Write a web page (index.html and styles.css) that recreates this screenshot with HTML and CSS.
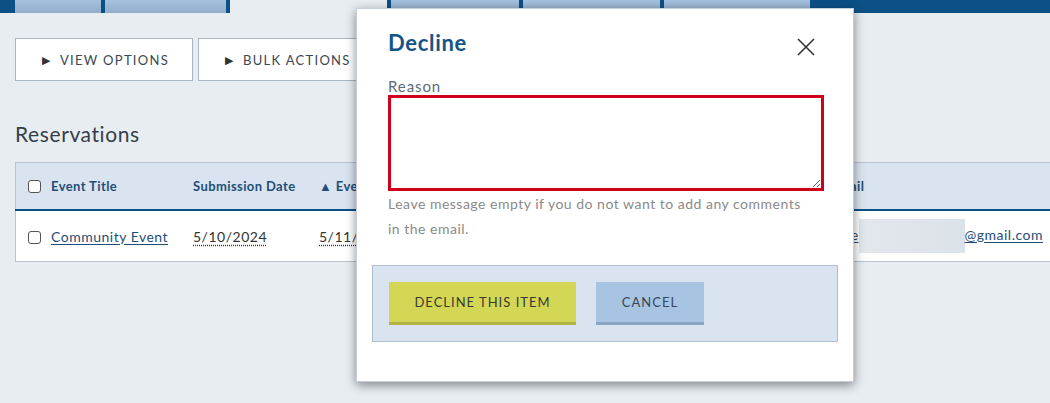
FILE: index.html
```html
<!DOCTYPE html>
<html lang="en">
<head>
  <meta charset="UTF-8">
  <meta name="viewport" content="width=device-width, initial-scale=1.0">
  <title>Reservations - Decline</title>
  <link rel="stylesheet" href="styles.css">
</head>
<body>

  <!-- Barra de abas no topo -->
  <div class="topnav">
    <span class="tab tab-1"></span>
    <span class="tab tab-2"></span>
    <span class="tab tab-3 ativa"></span>
    <span class="tab tab-4"></span>
    <span class="tab tab-5"></span>
    <span class="tab tab-6"></span>
  </div>

  <div class="page">
    <div class="toolbar">
      <button class="tool-btn btn-view"><span class="arrow">&#9654;</span>View Options</button>
      <button class="tool-btn btn-bulk"><span class="arrow">&#9654;</span>Bulk Actions</button>
    </div>

    <h2 class="titulo">Reservations</h2>

    <table class="tabela">
      <thead>
        <tr>
          <th class="col-title"><input type="checkbox" class="check">Event Title</th>
          <th class="col-sub">Submission Date</th>
          <th class="col-date">&#9650; Event Date</th>
          <th class="col-loc"></th>
          <th class="col-contact"></th>
          <th class="col-email">Email</th>
        </tr>
      </thead>
      <tbody>
        <tr>
          <td class="col-title"><input type="checkbox" class="check"><a href="#">Community Event</a></td>
          <td class="col-sub"><span class="data">5/10/2024</span></td>
          <td class="col-date"><span class="data">5/11/2024</span></td>
          <td class="col-loc"></td>
          <td class="col-contact"></td>
          <td class="col-email"><a href="#">jane<span class="oculto"></span>@gmail.com</a></td>
        </tr>
      </tbody>
    </table>
  </div>

  <!-- Modal de recusa -->
  <div class="modal">
    <div class="modal-head">
      <h3>Decline</h3>
      <button class="fechar" aria-label="Close">
        <svg width="18" height="18" viewBox="0 0 18 18">
          <path d="M1 1 L17 17 M17 1 L1 17" stroke="#333" stroke-width="1.6" fill="none"/>
        </svg>
      </button>
    </div>
    <label class="rotulo" for="motivo">Reason</label>
    <textarea id="motivo" class="motivo"></textarea>
    <p class="ajuda">Leave message empty if you do not want to add any comments in the email.</p>
    <div class="modal-foot">
      <button class="btn-decline">Decline This Item</button>
      <button class="btn-cancel">Cancel</button>
    </div>
  </div>

</body>
</html>
```

FILE: styles.css
```css
/* Estilos gerais */
body {
  margin: 0;
  padding: 0;
  font-family: "Lato", "Open Sans", sans-serif;
  letter-spacing: 0.5px;
  background: #e8edf2;
  overflow: hidden;
  height: 403px;
  position: relative;
}

/* Abas do topo */
.topnav {
  display: flex;
  gap: 4px;
  height: 13px;
  padding-left: 15px;
  background: #0b5186;
}

.tab {
  height: 13px;
  background: linear-gradient(#a6c2e0, #93adc9);
}

.tab.ativa {
  background: #e8edf2;
}

.tab-1 { width: 86px; }
.tab-2 { width: 121px; }
.tab-3 { width: 157px; }
.tab-4 { width: 128px; }
.tab-5 { width: 137px; }
.tab-6 { width: 146px; }

.page {
  padding: 0 15px;
}

/* Botões de opções */
.toolbar {
  display: flex;
  gap: 5px;
  margin-top: 25px;
}

.tool-btn {
  height: 43px;
  background: #fff;
  border: 1px solid #aab6c4;
  font-family: inherit;
  font-size: 13px;
  letter-spacing: 1.3px;
  text-transform: uppercase;
  color: #3b4754;
  display: flex;
  align-items: center;
  padding: 0 0 0 26px;
  cursor: pointer;
}

.btn-view { width: 178px; }
.btn-bulk { width: 190px; }

.arrow {
  font-size: 11px;
  color: #333;
  margin-right: 10px;
  letter-spacing: 0;
}

.titulo {
  margin: 40px 0 0;
  font-size: 21px;
  font-weight: normal;
  letter-spacing: 0.6px;
  color: #343e48;
  line-height: 26px;
}

/* Tabela de reservas */
.tabela {
  margin-top: 15px;
  width: 1080px;
  border-collapse: collapse;
  table-layout: fixed;
  background: #fff;
  border: 1px solid #b6c3d1;
}

.tabela th {
  height: 46px;
  background: #dae4f0;
  border-bottom: 2px solid #0b5186;
  text-align: left;
  font-size: 13px;
  font-weight: bold;
  letter-spacing: 0.4px;
  color: #1f4e78;
  padding: 0;
}

.tabela td {
  height: 50px;
  font-size: 14px;
  color: #333;
  padding: 0;
}

.col-title { width: 165px; padding-left: 12px !important; }
.col-sub { width: 126px; }
.col-date { width: 160px; }
.col-loc { width: 180px; }
.col-contact { width: 172px; }

.check {
  appearance: none;
  width: 13px;
  height: 13px;
  border: 1.5px solid #555;
  border-radius: 3px;
  background: #fff;
  margin: 0 10px 0 0;
  vertical-align: -2px;
  box-sizing: border-box;
}

.tabela a {
  color: #1f4e78;
  text-decoration: underline;
  text-underline-offset: 2px;
}

.data {
  text-decoration: underline dotted #333;
  text-underline-offset: 3px;
}

.oculto {
  display: inline-block;
  width: 106px;
  height: 34px;
  vertical-align: middle;
  background: linear-gradient(90deg, #e2e7ec, #dbe2e9);
}

/* Modal */
.modal {
  position: absolute;
  left: 356px;
  top: 8px;
  width: 498px;
  height: 374px;
  box-sizing: border-box;
  background: #fff;
  border: 1px solid #c5ced8;
  box-shadow: 0 3px 10px rgba(0,0,0,0.45);
  padding: 0 15px;
}

.modal-head {
  display: flex;
  justify-content: space-between;
  align-items: center;
  padding: 20px 23px 0 16px;
}

.modal-head h3 {
  margin: 0;
  font-size: 22px;
  font-weight: bold;
  letter-spacing: 0.7px;
  color: #155487;
  line-height: 28px;
}

.fechar {
  background: none;
  border: none;
  padding: 0;
  margin-top: 8px;
  cursor: pointer;
  display: flex;
}

.rotulo {
  display: block;
  margin: 20px 0 0 16px;
  font-size: 15px;
  letter-spacing: 0.9px;
  color: #5b6a79;
  line-height: 18px;
}

.motivo {
  display: block;
  margin: 0 0 0 16px;
  width: 436px;
  height: 96px;
  box-sizing: border-box;
  border: 3px solid #d0021b;
  resize: vertical;
}

.ajuda {
  margin: 0 0 0 16px;
  font-size: 14px;
  line-height: 25px;
  color: #8a8a8a;
  width: 425px;
}

.modal-foot {
  margin-top: 24px;
  height: 77px;
  box-sizing: border-box;
  background: #dae4f0;
  border: 1px solid #adbed1;
  display: flex;
  gap: 20px;
  padding: 16px 0 0 16px;
}

.modal-foot button {
  height: 43px;
  border: none;
  font-family: inherit;
  font-size: 13px;
  letter-spacing: 1px;
  text-transform: uppercase;
  cursor: pointer;
}

.btn-decline {
  width: 187px;
  background: #d4d655;
  border-bottom: 3px solid #b3b445 !important;
  color: #3a3a30;
}

.btn-cancel {
  width: 108px;
  background: #a7c4e2;
  border-bottom: 3px solid #8ba4c1 !important;
  color: #3a4658;
}
```
